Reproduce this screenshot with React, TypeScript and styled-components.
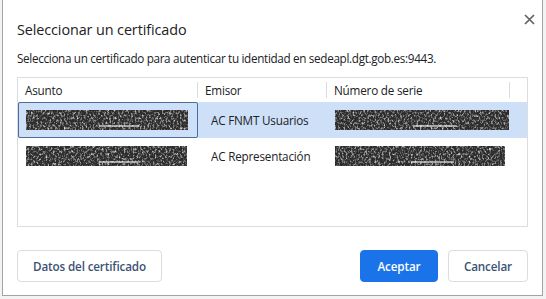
import styled, { createGlobalStyle } from 'styled-components'

const GlobalStyle = createGlobalStyle`
  html, body {
    margin: 0;
    padding: 0;
    background: #f3f3f3;
    font-family: "Open Sans", "Noto Sans", "Liberation Sans", sans-serif;
  }
`

const Page = styled.div`
  width: 546px;
  height: 299px;
  padding: 0 3px 2px 2px;
  box-sizing: border-box;
`

const Dialog = styled.div`
  height: 297px;
  margin-top: -1px;
  box-sizing: border-box;
  background: #fff;
  border: 1px solid #a3a3a3;
  padding: 0 14px;
  display: flex;
  flex-direction: column;
`

const TitleBar = styled.div`
  display: flex;
  justify-content: space-between;
  align-items: flex-start;
  margin-top: 19px;
  height: 22px;
`

const Title = styled.h1`
  margin: 0;
  font-size: 14.4px;
  font-weight: 400;
  line-height: 22px;
  color: #202124;
  letter-spacing: -0.1px;
`

const Close = styled.button`
  border: none;
  background: none;
  padding: 0;
  margin: -8px -9px 0 0;
  width: 16px;
  height: 16px;
  display: flex;
  align-items: center;
  justify-content: center;
`

const Subtitle = styled.p`
  margin: 8px 0 0 0;
  font-size: 11.7px;
  line-height: 18px;
  color: #202124;
  letter-spacing: -0.32px;
`

const Table = styled.div`
  margin-top: 10px;
  height: 150px;
  border: 1px solid #dadce0;
  box-sizing: border-box;
`

const Row = styled.div<{ $selected?: boolean; $header?: boolean }>`
  display: grid;
  grid-template-columns: 180px 129px 1fr;
  height: ${p => (p.$header ? '24px' : '36px')};
  background: ${p => (p.$selected ? '#cde0f7' : 'transparent')};
  font-size: 11.7px;
  letter-spacing: -0.2px;
  color: #202124;
`

const HeadCell = styled.div<{ $last?: boolean }>`
  display: flex;
  align-items: center;
  padding-left: 7px;
  position: relative;
  &::after {
    content: '';
    position: absolute;
    right: ${p => (p.$last ? '17px' : '0')};
    top: 4px;
    bottom: 4px;
    width: 1px;
    background: #dadce0;
  }
`

const Cell = styled.div<{ $focus?: boolean; $text?: boolean }>`
  display: flex;
  align-items: center;
  padding-left: ${p => (p.$text ? '12px' : '7px')};
  box-sizing: border-box;
  border: 1px solid ${p => (p.$focus ? '#4a6f9e' : 'transparent')};
  border-radius: 2px;
`

const Blur = styled.svg`
  display: block;
`

const Footer = styled.div`
  display: flex;
  align-items: center;
  margin-top: 23px;
  gap: 10px;
`

const Spacer = styled.div`
  flex: 1;
`

const Button = styled.button<{ $primary?: boolean }>`
  height: 32px;
  box-sizing: border-box;
  padding: 0 15px;
  border-radius: 4px;
  font-family: inherit;
  font-size: 11.7px;
  letter-spacing: -0.15px;
  font-weight: 600;
  border: 1px solid ${p => (p.$primary ? '#1a73e8' : '#dadce0')};
  background: ${p => (p.$primary ? '#1a73e8' : '#fff')};
  color: ${p => (p.$primary ? '#fff' : '#3b5275')};
  min-width: ${p => (p.$primary ? '78px' : '77px')};
`

const Redacted = ({ w, seed }: { w: number; seed: number }) => (
  <Blur width={w} height={20} viewBox={`0 0 ${w} 20`}>
    <defs>
      <filter id={`n${seed}`} x="0" y="0" width="100%" height="100%">
        <feTurbulence type="fractalNoise" baseFrequency="0.55 0.4" numOctaves="3" seed={seed} />
        <feColorMatrix
          type="matrix"
          values="0 0 0 0 1  0 0 0 0 1  0 0 0 0 1  2.4 0 0 0 -1.1"
        />
      </filter>
    </defs>
    <rect width={w} height="20" fill="#2c2c2c" />
    <rect width={w} height="20" fill="#fff" filter={`url(#n${seed})`} opacity="0.85" />
    <rect x={w * 0.45} y="15" width={w * 0.25} height="2" fill="#eee" opacity="0.6" />
  </Blur>
)

export default function App() {
  return (
    <>
      <GlobalStyle />
      <Page>
        <Dialog>
          <TitleBar>
            <Title>Seleccionar un certificado</Title>
            <Close aria-label="Cerrar">
              <svg width="11" height="11" viewBox="0 0 11 11">
                <path d="M1 1L10 10M10 1L1 10" stroke="#5f6368" strokeWidth="1.7" />
              </svg>
            </Close>
          </TitleBar>
          <Subtitle>
            Selecciona un certificado para autenticar tu identidad en sedeapl.dgt.gob.es:9443.
          </Subtitle>
          <Table>
            <Row $header>
              <HeadCell>Asunto</HeadCell>
              <HeadCell>Emisor</HeadCell>
              <HeadCell $last>Número de serie</HeadCell>
            </Row>
            <Row $selected>
              <Cell $focus>
                <Redacted w={162} seed={3} />
              </Cell>
              <Cell $text>AC FNMT Usuarios</Cell>
              <Cell>
                <Redacted w={174} seed={7} />
              </Cell>
            </Row>
            <Row>
              <Cell>
                <Redacted w={161} seed={11} />
              </Cell>
              <Cell $text>AC Representación</Cell>
              <Cell>
                <Redacted w={170} seed={19} />
              </Cell>
            </Row>
          </Table>
          <Footer>
            <Button>Datos del certificado</Button>
            <Spacer />
            <Button $primary>Aceptar</Button>
            <Button>Cancelar</Button>
          </Footer>
        </Dialog>
      </Page>
    </>
  )
}
